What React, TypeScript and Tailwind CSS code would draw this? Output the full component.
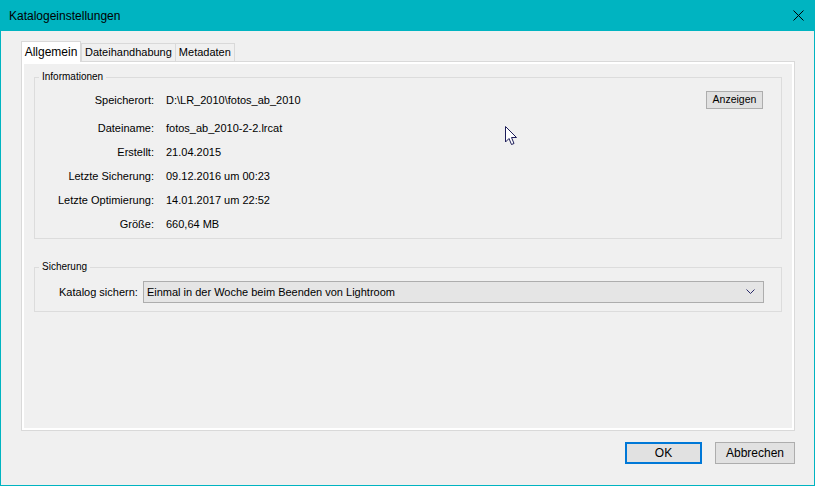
const font = { fontFamily: '"Liberation Sans", Arial, sans-serif' };

const rows = [
  { label: "Dateiname:", value: "fotos_ab_2010-2-2.lrcat" },
  { label: "Erstellt:", value: "21.04.2015" },
  { label: "Letzte Sicherung:", value: "09.12.2016 um 00:23" },
  { label: "Letzte Optimierung:", value: "14.01.2017 um 22:52" },
  { label: "Größe:", value: "660,64 MB" },
];

function Tab({ label, active }: { label: string; active?: boolean }) {
  if (active) {
    return (
      <div className="relative z-10 -mb-px flex h-[21px] w-[60px] items-center justify-center border border-b-0 border-[#d9d9d9] bg-white text-[12px] text-black">
        {label}
      </div>
    );
  }
  return (
    <div className="-ml-px flex h-[18px] items-center border border-b-0 border-[#d9d9d9] bg-[#f0f0f0] px-[3px] text-[11px] text-black first:ml-0">
      {label}
    </div>
  );
}

function Button({ label, focused }: { label: string; focused?: boolean }) {
  return (
    <button
      className={
        focused
          ? "flex h-[22px] w-[77px] items-center justify-center border-2 border-[#0078d7] bg-[#e1e1e1] text-[12px] text-black"
          : "flex h-[22px] w-[80px] items-center justify-center border border-[#adadad] bg-[#e1e1e1] text-[12px] text-black"
      }
    >
      {label}
    </button>
  );
}

export default function App() {
  return (
    <div
      className="relative flex h-[486px] w-[815px] flex-col border-x border-b border-[#00b4c1] bg-[#f0f0f0]"
      style={font}
    >
      <div className="flex h-[31px] shrink-0 items-center justify-between bg-[#00b4c1] pl-[8px] pr-[10px] text-[12px] text-black">
        <span>Katalogeinstellungen</span>
        <svg width="11" height="11" viewBox="0 0 11 11">
          <path d="M0.5 0.5 L10.5 10.5 M10.5 0.5 L0.5 10.5" stroke="#000" strokeWidth="1" />
        </svg>
      </div>

      <div className="flex flex-1 flex-col pl-[20px] pr-[19px] pt-[10px]">
        <div className="flex items-end">
          <Tab label="Allgemein" active />
          <div className="flex items-end">
            <Tab label="Dateihandhabung" />
            <Tab label="Metadaten" />
          </div>
        </div>

        <div className="h-[370px] border border-[#d9d9d9]">
          <div className="flex h-full flex-col border-2 border-white px-[10px] pt-[7px]">
            <fieldset className="border border-[#dcdcdc] px-0 pb-[2px] pt-[5px]">
              <legend className="ml-[4px] px-[3px] text-[10px] leading-[12px] text-black">
                Informationen
              </legend>
              <div className="flex h-[24px] items-center text-[11px] text-black">
                <span className="w-[119px] text-right">Speicherort:</span>
                <span className="ml-[12px] flex-1">D:\LR_2010\fotos_ab_2010</span>
                <button className="mr-[18px] flex h-[18px] w-[57px] items-center justify-center border border-[#adadad] bg-[#e1e1e1] text-[10.5px] text-black">
                  Anzeigen
                </button>
              </div>
              <div className="mt-[4px] flex flex-col">
                {rows.map((r) => (
                  <div key={r.label} className="flex h-[24px] items-center text-[11px] text-black">
                    <span className="w-[119px] text-right">{r.label}</span>
                    <span className="ml-[12px]">{r.value}</span>
                  </div>
                ))}
              </div>
            </fieldset>

            <fieldset className="mt-[22px] border border-[#dcdcdc] px-0 pb-[8px] pt-[8px]">
              <legend className="ml-[4px] px-[3px] text-[10px] leading-[12px] text-black">
                Sicherung
              </legend>
              <div className="flex items-center pl-[24px] pr-[17px] text-[11px] text-black">
                <span>Katalog sichern:</span>
                <div className="ml-[5px] flex h-[22px] flex-1 items-center justify-between border border-[#adadad] bg-[#e5e5e5] pl-[3px] pr-[8px]">
                  <span>Einmal in der Woche beim Beenden von Lightroom</span>
                  <svg width="9" height="6" viewBox="0 0 9 6">
                    <path d="M0.5 0.5 L4.5 4.5 L8.5 0.5" fill="none" stroke="#2a2a6a" strokeWidth="1" />
                  </svg>
                </div>
              </div>
            </fieldset>
          </div>
        </div>

        <div className="mt-[11px] flex justify-end gap-[13px]">
          <Button label="OK" focused />
          <Button label="Abbrechen" />
        </div>
      </div>

      <svg
        className="absolute left-[504px] top-[126px]"
        width="13"
        height="20"
        viewBox="0 0 13 20"
      >
        <path
          d="M0.5 0.5 L0.5 16 L4 12.5 L6.5 18.5 L9 17.5 L6.5 11.5 L11.5 11.5 Z"
          fill="#fff"
          stroke="#1e1e5a"
          strokeWidth="1"
        />
      </svg>
    </div>
  );
}
